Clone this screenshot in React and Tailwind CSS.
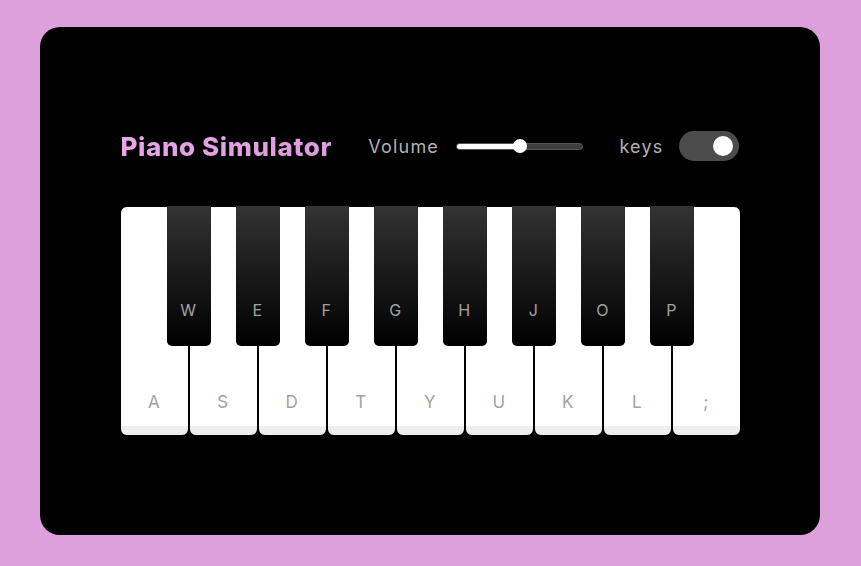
import React, { useState } from "react";

const whiteKeys = ["a", "s", "d", "t", "y", "u", "k", "l", ";"];
const blackKeys = ["w", "e", "f", "g", "h", "j", "o", "p"];

export default function App() {
  const [volume, setVolume] = useState(50);
  const [showKeys, setShowKeys] = useState(true);

  return (
    <div
      className="min-h-screen w-full bg-[#dda0dd] pt-[27px] pl-[40px]"
      style={{ fontFamily: "Inter, 'Noto Sans', sans-serif" }}
    >
      <div className="w-[780px] h-[508px] bg-black rounded-[20px] flex flex-col items-center pt-[104px]">
        <header className="w-[619px] h-[30px] flex items-center justify-between text-[#b2b2b2]">
          <h2 className="text-[26px] font-extrabold tracking-[0.6px] bg-gradient-to-r from-[#e9a5e9] to-[#dd9cdd] bg-clip-text text-transparent">
            Piano Simulator
          </h2>
          <div className="flex items-center gap-[17px]">
            <span className="text-[18px] tracking-[1.2px]">Volume</span>
            <div className="relative w-[127px] h-[14px] flex items-center">
              <div className="w-full h-[7px] rounded-full bg-[#3d3d3d] border border-[#555] overflow-hidden">
                <div className="h-full bg-white" style={{ width: `${volume}%` }} />
              </div>
              <div
                className="absolute w-[14px] h-[14px] rounded-full bg-white -translate-x-1/2"
                style={{ left: `${volume}%` }}
              />
            </div>
          </div>
          <div className="flex items-center gap-[16px]">
            <span className="text-[18px] tracking-[1.2px]">keys</span>
            <button
              onClick={() => setShowKeys(!showKeys)}
              className="relative w-[60px] h-[30px] rounded-full bg-[#4b4b4b]"
            >
              <span
                className={
                  showKeys
                    ? "absolute top-[5px] left-[34px] w-[20px] h-[20px] rounded-full bg-white"
                    : "absolute top-[5px] left-[5px] w-[20px] h-[20px] rounded-full bg-white"
                }
              />
            </button>
          </div>
        </header>
        <ul className="flex mt-[45px] select-none">
          {whiteKeys.map((k, i) => (
            <React.Fragment key={k}>
              <li className="relative w-[69px] h-[230px] rounded-[7px] border border-black bg-[linear-gradient(#fff_96%,#eee_4%)]">
                <span className="absolute bottom-[20px] w-full text-center text-[17px] tracking-[0.5px] text-[#a2a2a2] uppercase">
                  {showKeys ? k : ""}
                </span>
              </li>
              {i < blackKeys.length && (
                <li className="relative z-10 w-[44px] h-[140px] -mx-[22px] rounded-b-[5px] bg-[linear-gradient(#333,#000)]">
                  <span className="absolute bottom-[24px] w-full text-center text-[16px] tracking-[0.5px] text-[#a2a2a2] uppercase">
                    {showKeys ? blackKeys[i] : ""}
                  </span>
                </li>
              )}
            </React.Fragment>
          ))}
        </ul>
      </div>
    </div>
  );
}
